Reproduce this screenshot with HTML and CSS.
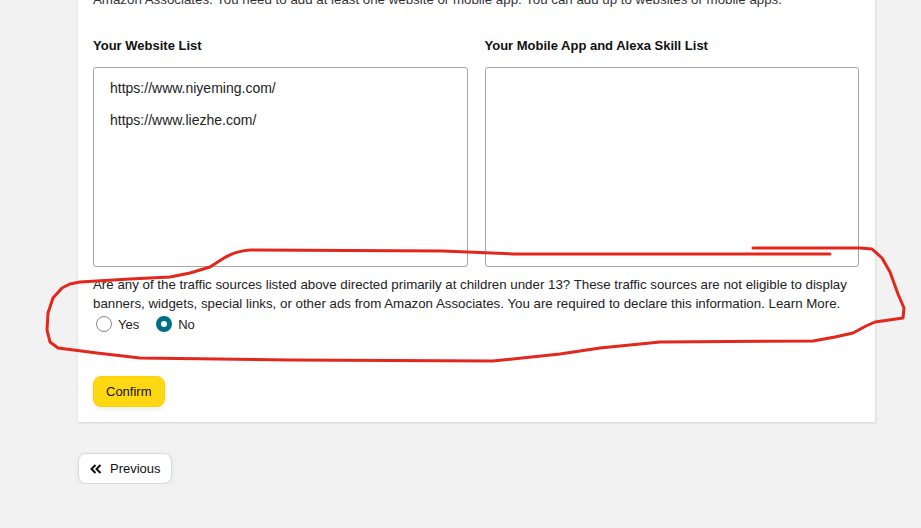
FILE: index.html
```html
<!DOCTYPE html>
<html lang="en">
<head>
    <meta charset="UTF-8">
    <meta name="viewport" content="width=device-width, initial-scale=1.0">
    <title>Website and Mobile App List</title>
    <link rel="stylesheet" href="styles.css">
</head>
<body>

    <div class="page">
        <div class="card">
            <p class="intro">Amazon Associates. You need to add at least one website or mobile app. You can add up to websites or mobile apps.</p>

            <div class="lists">
                <div class="list-col">
                    <div class="list-label">Your Website List</div>
                    <div class="list-box">
                        <div class="list-line">https://www.niyeming.com/</div>
                        <div class="list-line">https://www.liezhe.com/</div>
                    </div>
                </div>
                <div class="list-col">
                    <div class="list-label">Your Mobile App and Alexa Skill List</div>
                    <div class="list-box"></div>
                </div>
            </div>

            <p class="note">Are any of the traffic sources listed above directed primarily at children under 13? These traffic sources are not eligible to display banners, widgets, special links, or other ads from Amazon Associates. You are required to declare this information. Learn More.</p>

            <div class="radios">
                <label class="radio-item"><span class="radio"></span>Yes</label>
                <label class="radio-item"><span class="radio checked"></span>No</label>
            </div>

            <button class="btn-confirm">Confirm</button>
        </div>

        <button class="btn-prev">
            <svg class="prev-icon" width="12" height="10" viewBox="0 0 12 10">
                <path d="M5.5 1 L1.5 5 L5.5 9 M10.5 1 L6.5 5 L10.5 9" fill="none" stroke="#0f1111" stroke-width="2"/>
            </svg>
            Previous
        </button>

        <!-- hand drawn markup over the form -->
        <svg class="markup" width="921" height="528" viewBox="0 0 921 528">
            <path d="M830 254 L513 254 L443 251 L250 250 C238 251 232 253 224 258 L210 267 L190 273 L170 277 L130 279 L80 282 L70 284 L62 288 L53 298 L48 313 L47 330 L50 342 L58 348 L97 353 L140 358 L290 360 L493 361 L560 354 L600 348 L660 342 L813 341 L835 337 L853 333 L866 326 L875 322 L903 318 L904 308 L898 294 L890 272 L882 258 L872 249 L860 248 L753 248"
                  fill="none" stroke="#e3271d" stroke-width="3" stroke-linejoin="round" stroke-linecap="round"/>
        </svg>
    </div>

</body>
</html>
```

FILE: styles.css
```css
body {
    margin: 0;
    padding: 0;
    background-color: #f2f2f2;
    font-family: "Liberation Sans", Arial, sans-serif;
    font-size: 13px;
    color: #0f1111;
}
.page {
    position: relative;
    padding-left: 78px;
    margin-top: -15px;
}
.card {
    width: 766px;
    padding: 0 16px 15px 15px;
    background-color: #ffffff;
    border-right: 1px solid #e3e3e3;
    box-shadow: 0 1px 2px rgba(0,0,0,0.12);
}
.intro {
    margin: 0;
    font-size: 13.3px;
    line-height: 19px;
    color: #333;
    padding-top: 5px;
}
.lists {
    display: flex;
    gap: 17px;
    margin-top: 27px;
}
.list-col {
    width: 375px;
}
.list-label {
    font-weight: bold;
    line-height: 19px;
    margin-bottom: 12px;
}
.list-box {
    height: 174px;
    border: 1px solid #a6a6a6;
    border-radius: 3px;
    padding: 12px 16px;
}
.list-line {
    font-size: 14px;
    line-height: 17px;
    margin-bottom: 15px;
    color: #222;
}
.note {
    margin: 8px 0 0 0;
    font-size: 13.3px;
    line-height: 19px;
    color: #222;
}
.radios {
    display: flex;
    gap: 17px;
    margin-left: 3px;
    margin-top: 1px;
    height: 20px;
    align-items: center;
}
.radio-item {
    display: flex;
    align-items: center;
    gap: 6px;
    color: #222;
}
.radio {
    width: 14px;
    height: 14px;
    border: 1px solid #8a8a8a;
    border-radius: 50%;
    background: #fff;
    box-sizing: content-box;
}
.radio.checked {
    width: 6px;
    height: 6px;
    border: 5px solid #007185;
    background: #fff;
}
.btn-confirm {
    display: block;
    margin-top: 42px;
    height: 31px;
    padding: 0 12px;
    font-family: inherit;
    font-size: 13px;
    color: #0f1111;
    background-color: #ffd814;
    border: 1px solid #fcd200;
    border-radius: 8px;
    box-shadow: 0 2px 5px rgba(213,217,217,0.5);
}
.btn-prev {
    display: flex;
    align-items: center;
    gap: 8px;
    margin-top: 31px;
    height: 31px;
    padding: 0 10px 0 11px;
    font-family: inherit;
    font-size: 13px;
    color: #0f1111;
    background-color: #ffffff;
    border: 1px solid #d5d9d9;
    border-radius: 8px;
    box-shadow: 0 2px 5px rgba(213,217,217,0.5);
}
.markup {
    position: absolute;
    left: 0;
    top: 15px;
    pointer-events: none;
}
```
